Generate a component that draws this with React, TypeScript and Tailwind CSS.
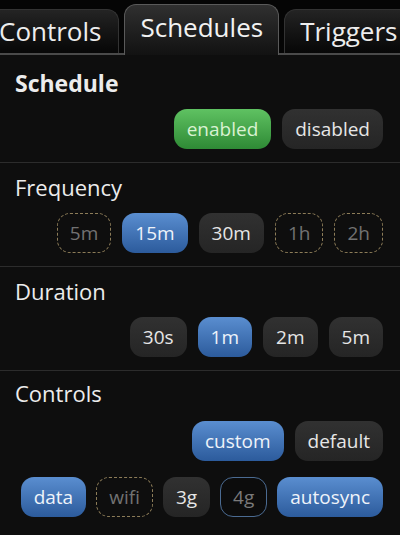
import type { ReactNode } from "react";

type Variant = "green" | "blue" | "gray" | "dashed" | "outline";

const variantClass: Record<Variant, string> = {
  green: "px-[13px] bg-gradient-to-b from-[#5fc262] to-[#2e8a35] text-[#d9f2d2]",
  blue: "px-[13px] bg-gradient-to-b from-[#5a8ed0] to-[#2c5b9c] text-[#eef3fa]",
  gray: "px-[13px] bg-gradient-to-b from-[#313131] to-[#252525] text-[#e6e6e6]",
  dashed: "px-[12px] border-[1.5px] border-dashed border-[#8c7c58] text-[#727272]",
  outline: "px-[12px] border-[1.5px] border-[#4b6b92] bg-[#0c0c0c] text-[#7a7a7a]",
};

function Pill({ label, variant = "gray" }: { label: string; variant?: Variant }) {
  return (
    <div
      className={`h-[40px] rounded-[13px] flex items-center justify-center text-[19px] leading-none ${variantClass[variant]}`}
    >
      {label}
    </div>
  );
}

function Section({ title, bold, children }: { title: string; bold?: boolean; children: ReactNode }) {
  return (
    <div className="border-b border-[#2c2c2c] px-[15px] pt-[10px] pb-[13px]">
      <div className={`leading-[28px] text-[#ececec] ${bold ? "font-bold text-[23px]" : "text-[22px]"}`}>{title}</div>
      <div className="mt-[12px] flex flex-col gap-[15px]">{children}</div>
    </div>
  );
}

function Row({ children }: { children: ReactNode }) {
  return <div className="flex justify-end gap-[11px] pr-[2px]">{children}</div>;
}

export default function App() {
  return (
    <div className="w-[400px] h-[535px] overflow-hidden bg-[#0e0e0e] font-['Open_Sans',sans-serif] select-none">
      {/* tab strip */}
      <div className="flex items-end h-[55px] border-b-[2px] border-[#4a4a4a] bg-[#050505]">
        <div className="ml-[-18px] shrink-0 h-[44px] pl-[16px] pr-[17px] rounded-t-[12px] border border-b-0 border-[#333] bg-gradient-to-b from-[#242424] to-[#070707] flex items-center text-[26px] text-[#ededed]">
          Controls
        </div>
        <div className="ml-[5px] shrink-0 h-[51px] -mb-[2px] px-[15px] rounded-t-[12px] border border-b-0 border-[#5a5a5a] bg-gradient-to-b from-[#303030] to-[#121212] flex items-center pb-[6px] text-[26px] text-[#f2f2f2]">
          Schedules
        </div>
        <div className="ml-[5px] shrink-0 h-[44px] px-[15px] rounded-t-[12px] border border-b-0 border-[#333] bg-gradient-to-b from-[#242424] to-[#070707] flex items-center text-[26px] text-[#ededed]">
          Triggers
        </div>
      </div>

      <div className="pt-[4px]">
        <Section title="Schedule" bold>
          <Row>
            <Pill label="enabled" variant="green" />
            <Pill label="disabled" />
          </Row>
        </Section>
        <Section title="Frequency">
          <Row>
            <Pill label="5m" variant="dashed" />
            <Pill label="15m" variant="blue" />
            <Pill label="30m" />
            <Pill label="1h" variant="dashed" />
            <Pill label="2h" variant="dashed" />
          </Row>
        </Section>
        <Section title="Duration">
          <Row>
            <Pill label="30s" />
            <Pill label="1m" variant="blue" />
            <Pill label="2m" />
            <Pill label="5m" />
          </Row>
        </Section>
        <div className="px-[15px] pt-[8px]">
          <div className="text-[22px] leading-[28px] text-[#ececec]">Controls</div>
          <div className="mt-[14px] flex flex-col gap-[16px]">
            <Row>
              <Pill label="custom" variant="blue" />
              <Pill label="default" />
            </Row>
            <div className="flex justify-end gap-[10px] pr-[2px]">
              <Pill label="data" variant="blue" />
              <Pill label="wifi" variant="dashed" />
              <Pill label="3g" />
              <Pill label="4g" variant="outline" />
              <Pill label="autosync" variant="blue" />
            </div>
          </div>
        </div>
      </div>
    </div>
  );
}
